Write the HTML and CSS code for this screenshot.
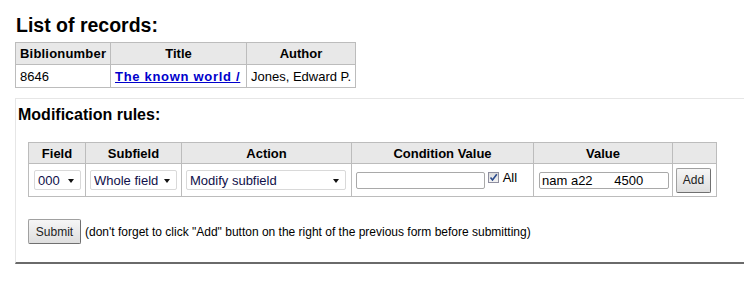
FILE: index.html
```html
<!DOCTYPE html>
<html lang="en">

<head>
    <meta charset="UTF-8">
    <title>Batch record modification</title>
    <link rel="stylesheet" href="styles.css">
</head>

<body>
    <main class="page">
        <h1>List of records:</h1>
        <table class="records">
            <colgroup>
                <col class="c-bib">
                <col class="c-title">
                <col class="c-author">
            </colgroup>
            <thead>
                <tr>
                    <th>Biblionumber</th>
                    <th>Title</th>
                    <th>Author</th>
                </tr>
            </thead>
            <tbody>
                <tr>
                    <td>8646</td>
                    <td><a href="#" class="title-link">The known world /</a></td>
                    <td>Jones, Edward P.</td>
                </tr>
            </tbody>
        </table>

        <div class="rules-box">
            <h2>Modification rules:</h2>
            <table class="rules">
                <colgroup>
                    <col class="c-field">
                    <col class="c-subfield">
                    <col class="c-action">
                    <col class="c-cond">
                    <col class="c-value">
                    <col class="c-add">
                </colgroup>
                <thead>
                    <tr>
                        <th>Field</th>
                        <th>Subfield</th>
                        <th>Action</th>
                        <th>Condition Value</th>
                        <th>Value</th>
                        <th></th>
                    </tr>
                </thead>
                <tbody>
                    <tr>
                        <td><span class="sel sel-field"><select><option>000</option></select></span></td>
                        <td><span class="sel sel-subfield"><select><option>Whole field</option></select></span></td>
                        <td><span class="sel sel-action"><select><option>Modify subfield</option></select></span></td>
                        <td class="cond-cell">
                            <input type="text" class="text-input cond-input">
                            <span class="check"><span class="check-box">
                                <svg width="9" height="9" viewBox="0 0 9 9"><path d="M1.5 4.5 L3.5 7 L7.8 1.2" fill="none" stroke="#2b4a8c" stroke-width="1.6"/></svg>
                            </span>All</span>
                        </td>
                        <td><input type="text" class="text-input value-input" value="nam a22      4500"></td>
                        <td><button class="btn add-btn">Add</button></td>
                    </tr>
                </tbody>
            </table>

            <div class="submit-row">
                <button class="btn submit-btn">Submit</button>
                <span class="hint">(don't forget to click "Add" button on the right of the previous form before submitting)</span>
            </div>
        </div>
    </main>
</body>

</html>
```

FILE: styles.css
```css
body {
    margin: 0;
    padding: 0;
    background: #fff;
    color: #000;
    font-family: Arial, "Liberation Sans", sans-serif;
    font-size: 13px;
}

.page {
    padding-left: 15px;
    padding-top: 14px;
}

h1 {
    margin: 0 0 6px 1px;
    font-size: 19.5px;
    line-height: 22px;
    font-weight: bold;
}

h2 {
    margin: 0 0 19px 2px;
    font-size: 16px;
    line-height: 17px;
    font-weight: bold;
}

table {
    border-collapse: collapse;
}

th,
td {
    border: 1px solid #bcbcbc;
    font-size: 13px;
    line-height: 15px;
}

th {
    background: #e8e8e8;
    font-weight: bold;
    text-align: center;
}

.records {
    table-layout: fixed;
    width: 340px;
}

.c-bib { width: 95px; }
.c-title { width: 136px; }
.c-author { width: 109px; }

.records th {
    padding: 3px 4px 3px 4px;
}

.records th:first-child {
    text-align: left;
    letter-spacing: 0.2px;
}

.records td {
    padding: 4px 4px 3px 4px;
    text-align: left;
    white-space: nowrap;
}

.title-link {
    color: #0000cc;
    font-weight: bold;
    text-decoration: underline;
    letter-spacing: 0.7px;
}

.rules-box {
    margin-top: 10px;
    border-top: 1px solid #e6e6e6;
    border-left: 1px solid #e6e6e6;
    border-bottom: 2px solid #6a6a6a;
    padding: 7px 0 18px 0;
}

.rules {
    margin-left: 12px;
    table-layout: fixed;
    width: 689px;
}

.c-field { width: 57px; }
.c-subfield { width: 96px; }
.c-action { width: 170px; }
.c-cond { width: 182px; }
.c-value { width: 139px; }
.c-add { width: 44px; }

.rules th {
    padding: 3px 2px 2px 2px;
}

.rules td {
    padding: 0 4px;
    height: 32px;
    white-space: nowrap;
}

.sel {
    position: relative;
    display: inline-block;
    vertical-align: middle;
}

.sel select {
    appearance: none;
    -webkit-appearance: none;
    height: 20px;
    border: 1px solid #d9d9d9;
    border-radius: 2px;
    background: #fff;
    color: #10104a;
    font-family: Arial, "Liberation Sans", sans-serif;
    font-size: 13px;
    padding: 0 0 0 3px;
    margin: 0;
}

.sel::after {
    content: "";
    position: absolute;
    right: 7px;
    top: 9px;
    border-left: 3.5px solid transparent;
    border-right: 3.5px solid transparent;
    border-top: 4px solid #111;
    pointer-events: none;
}

.sel-field select { width: 47px; margin-left: 1px; }
.sel-subfield select { width: 87px; }
.sel-action select { width: 160px; }

.text-input {
    box-sizing: border-box;
    height: 17px;
    border: 1px solid #a9a9a9;
    border-radius: 2px;
    font-family: Arial, "Liberation Sans", sans-serif;
    font-size: 13px;
    color: #000;
    padding: 0 2px;
    margin: 0;
    vertical-align: middle;
    white-space: pre;
}

.cond-input {
    width: 129px;
}

.value-input {
    width: 130px;
    margin-left: 1px;
}

.check {
    display: inline-flex;
    align-items: center;
    gap: 4px;
    margin-left: -1px;
    vertical-align: middle;
    position: relative;
    top: -3px;
}

.check-box {
    box-sizing: border-box;
    width: 11px;
    height: 11px;
    border: 1px solid #8f8f9f;
    background: linear-gradient(#dcdcdc, #f4f4f4);
    display: flex;
    align-items: center;
    justify-content: center;
}

.btn {
    box-sizing: border-box;
    height: 25px;
    border: 1px solid #a0a0a0;
    border-right-color: #707070;
    border-bottom-color: #707070;
    border-radius: 2px;
    background: linear-gradient(#f6f6f6, #dedede);
    color: #222;
    font-family: Arial, "Liberation Sans", sans-serif;
    font-size: 12px;
    padding: 0 5px;
    margin: 0;
    vertical-align: middle;
}

.add-btn {
    width: 35px;
    margin-left: -1px;
}

.submit-btn {
    width: 53px;
}

.submit-row {
    margin: 22px 0 0 12px;
    display: flex;
    align-items: center;
    gap: 4px;
}

.hint {
    font-size: 12px;
    color: #000;
}
```
